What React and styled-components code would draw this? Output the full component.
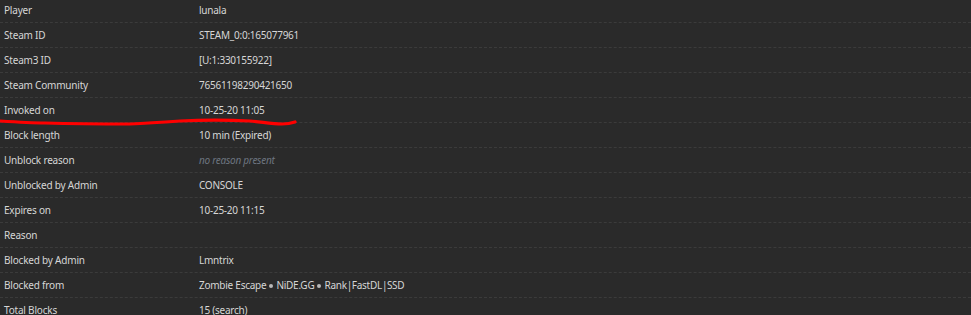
import React from "react";
import styled, { createGlobalStyle } from "styled-components";

const Global = createGlobalStyle`
  html, body { margin: 0; padding: 0; background: #2a2a2a; }
  body { font-family: "Noto Sans", "Open Sans", sans-serif; }
`;

const Wrap = styled.div`
  position: relative;
  width: 971px;
  height: 315px;
  overflow: hidden;
  background: #2a2a2a;
`;

const Table = styled.div`
  margin-top: -2px;
  display: flex;
  flex-direction: column;
`;

const Row = styled.div`
  display: grid;
  grid-template-columns: 195px 1fr;
  height: 25px;
  align-items: center;
  border-bottom: 1px dashed #3b3b3b;
  box-sizing: border-box;
`;

const Label = styled.div`
  padding-left: 4px;
  font-size: 10px;
  letter-spacing: -0.2px;
  color: #d6d6d6;
  white-space: nowrap;
`;

const Value = styled.div`
  padding-left: 4px;
  font-size: 10px;
  letter-spacing: -0.25px;
  color: ${(p) => (p.$muted ? "#6d7580" : "#d6d6d6")};
  font-style: ${(p) => (p.$muted ? "italic" : "normal")};
  white-space: nowrap;
`;

const Dot = styled.span`
  display: inline-block;
  width: 4px;
  height: 4px;
  border-radius: 50%;
  background: #b8b8b8;
  margin: 0 3px;
  vertical-align: 1px;
`;

const Pipe = styled.span`
  letter-spacing: -0.6px;
`;

const Mark = styled.svg`
  position: absolute;
  left: 0;
  top: 114px;
  pointer-events: none;
`;

const rows = [
  ["Player", "lunala"],
  ["Steam ID", "STEAM_0:0:165077961"],
  ["Steam3 ID", "[U:1:330155922]"],
  ["Steam Community", "76561198290421650"],
  ["Invoked on", "10-25-20 11:05"],
  ["Block length", "10 min (Expired)"],
  ["Unblock reason", "no reason present", true],
  ["Unblocked by Admin", "CONSOLE"],
  ["Expires on", "10-25-20 11:15"],
  ["Reason", ""],
  ["Blocked by Admin", "Lmntrix"],
  [
    "Blocked from",
    <>
      Zombie Escape<Dot />NiDE.GG<Dot />Rank<Pipe>|</Pipe>FastDL<Pipe>|</Pipe>SSD
    </>,
  ],
  ["Total Blocks", "15 (search)"],
];

export default function App() {
  return (
    <>
      <Global />
      <Wrap>
        <Table>
          {rows.map(([l, v, m]) => (
            <Row key={l}>
              <Label>{l}</Label>
              <Value $muted={m}>{v}</Value>
            </Row>
          ))}
        </Table>
        <Mark width="300" height="16" viewBox="0 0 300 16">
          <path
            d="M0 7 C 15 8, 30 9, 45 9 C 80 10, 110 10, 130 10 C 150 9, 165 8, 180 7 C 200 6, 230 6, 250 7 C 262 8, 272 10, 282 10 C 288 10, 292 9, 295 8"
            fill="none"
            stroke="#ff0000"
            strokeWidth="3.2"
            strokeLinecap="round"
          />
        </Mark>
      </Wrap>
    </>
  );
}
